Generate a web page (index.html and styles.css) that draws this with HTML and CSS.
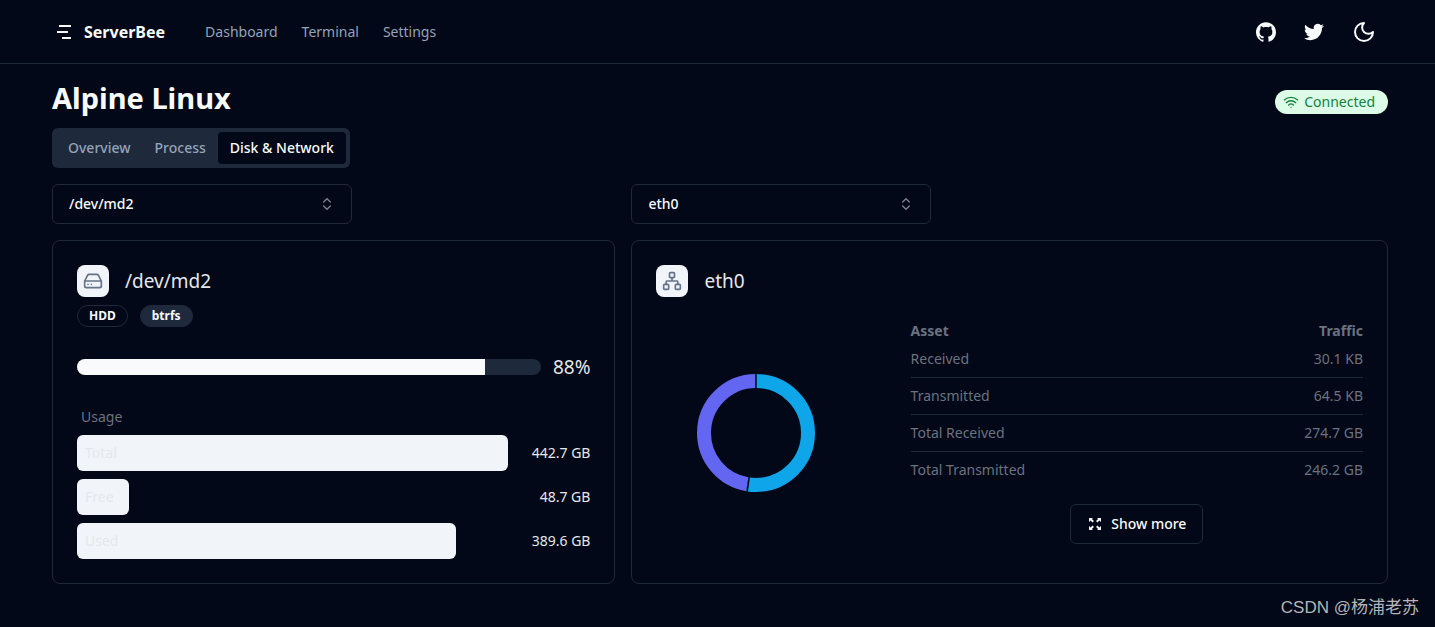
FILE: index.html
```html
<!DOCTYPE html>
<html lang="en">
<head>
<meta charset="utf-8">
<meta name="viewport" content="width=device-width, initial-scale=1">
<title>ServerBee</title>
<link rel="stylesheet" href="styles.css">
</head>
<body>
<header class="site-header">
  <a class="brand" href="#">
    <svg class="brand-mark" width="16" height="16" viewBox="0 0 16 16" fill="currentColor" aria-hidden="true"><path d="M3 1h12v2H3zM1 7h11v2H1zM6 13h9v2H6z"/></svg>
    <span>ServerBee</span>
  </a>
  <nav class="site-nav">
    <a href="#">Dashboard</a>
    <a href="#">Terminal</a>
    <a href="#">Settings</a>
  </nav>
  <div class="site-actions">
    <a class="icon-button" href="#" aria-label="GitHub">
      <svg width="20" height="20" viewBox="0 0 24 24" fill="currentColor"><path d="M12 .297c-6.63 0-12 5.373-12 12 0 5.303 3.438 9.8 8.205 11.385.6.113.82-.258.82-.577 0-.285-.01-1.04-.015-2.04-3.338.724-4.042-1.61-4.042-1.61C4.422 18.07 3.633 17.7 3.633 17.7c-1.087-.744.084-.729.084-.729 1.205.084 1.838 1.236 1.838 1.236 1.07 1.835 2.809 1.305 3.495.998.108-.776.417-1.305.76-1.605-2.665-.3-5.466-1.332-5.466-5.93 0-1.31.465-2.38 1.235-3.22-.135-.303-.54-1.523.105-3.176 0 0 1.005-.322 3.3 1.23.96-.267 1.98-.399 3-.405 1.02.006 2.04.138 3 .405 2.28-1.552 3.285-1.23 3.285-1.23.645 1.653.24 2.873.12 3.176.765.84 1.23 1.91 1.23 3.22 0 4.61-2.805 5.625-5.475 5.92.42.36.81 1.096.81 2.22 0 1.606-.015 2.896-.015 3.286 0 .315.21.69.825.57C20.565 22.092 24 17.592 24 12.297c0-6.627-5.373-12-12-12"/></svg>
    </a>
    <a class="icon-button" href="#" aria-label="Twitter">
      <svg width="20" height="20" viewBox="0 0 24 24" fill="currentColor"><path d="M23.953 4.57a10 10 0 01-2.825.775 4.958 4.958 0 002.163-2.723c-.951.555-2.005.959-3.127 1.184a4.92 4.92 0 00-8.384 4.482C7.69 8.095 4.067 6.13 1.64 3.162a4.822 4.822 0 00-.666 2.475c0 1.71.87 3.213 2.188 4.096a4.904 4.904 0 01-2.228-.616v.06a4.923 4.923 0 003.946 4.827 4.996 4.996 0 01-2.212.085 4.936 4.936 0 004.604 3.417 9.867 9.867 0 01-6.102 2.105c-.39 0-.779-.023-1.17-.067a13.995 13.995 0 007.557 2.209c9.053 0 13.998-7.496 13.998-13.985 0-.21 0-.42-.015-.63A9.935 9.935 0 0024 4.59z"/></svg>
    </a>
    <button class="icon-button icon-button-wide" type="button" aria-label="Toggle theme">
      <svg width="24" height="24" viewBox="0 0 24 24" fill="none" stroke="currentColor" stroke-width="2" stroke-linecap="round" stroke-linejoin="round"><path d="M12 3a6 6 0 0 0 9 9 9 9 0 1 1-9-9Z"/></svg>
    </button>
  </div>
</header>

<main class="page">
  <div class="page-heading">
    <h1>Alpine Linux</h1>
    <span class="status">
      <svg width="16" height="16" viewBox="0 0 24 24" fill="none" stroke="currentColor" stroke-width="2" stroke-linecap="round" stroke-linejoin="round" aria-hidden="true"><path d="M5 13a10 10 0 0 1 14 0M8.500 16.500a5 5 0 0 1 7 0M2 8.820a15 15 0 0 1 20 0M12 20h.01"/></svg>
      Connected
    </span>
  </div>

  <div class="tabs" role="tablist">
    <button class="tab" type="button" role="tab" aria-selected="false">Overview</button>
    <button class="tab" type="button" role="tab" aria-selected="false">Process</button>
    <button class="tab tab-active" type="button" role="tab" aria-selected="true">Disk &amp; Network</button>
  </div>

  <div class="panels">
    <div class="column column-disk">
      <div class="picker">
        <select class="picker-select" aria-label="Disk"><option>/dev/md2</option></select>
        <svg class="picker-icon" width="16" height="16" viewBox="0 0 24 24" fill="none" stroke="currentColor" stroke-width="2" stroke-linecap="round" stroke-linejoin="round" aria-hidden="true"><path d="m7 15 5 5 5-5M7 9l5-5 5 5"/></svg>
      </div>
      <section class="card">
        <div class="card-title">
          <span class="card-icon"><svg width="20" height="20" viewBox="0 0 24 24" fill="none" stroke="currentColor" stroke-width="2" stroke-linecap="round" stroke-linejoin="round" aria-hidden="true"><path d="M22 12H2M5.450 5.110 2 12v6a2 2 0 0 0 2 2h16a2 2 0 0 0 2-2v-6l-3.450-6.890A2 2 0 0 0 16.760 4H7.240a2 2 0 0 0-1.790 1.110zM6 16h.01M10 16h.01"/></svg></span>
          <h2>/dev/md2</h2>
        </div>
        <div class="badges">
          <span class="badge">HDD</span>
          <span class="badge badge-solid">btrfs</span>
        </div>
        <div class="meter">
          <div class="meter-track" role="progressbar" aria-label="Disk used" aria-valuenow="88" aria-valuemin="0" aria-valuemax="100"><div class="meter-fill" style="width:88%"></div></div>
          <span class="meter-value">88%</span>
        </div>
        <h3 class="usage-title">Usage</h3>
        <div class="usage">
          <div class="usage-track"><div class="usage-bar" style="width:100%">Total</div></div>
          <span class="usage-value">442.7 GB</span>
          <div class="usage-track"><div class="usage-bar" style="width:12%">Free</div></div>
          <span class="usage-value">48.7 GB</span>
          <div class="usage-track"><div class="usage-bar" style="width:88%">Used</div></div>
          <span class="usage-value">389.6 GB</span>
        </div>
      </section>
    </div>

    <div class="column column-network">
      <div class="picker">
        <select class="picker-select" aria-label="Network interface"><option>eth0</option></select>
        <svg class="picker-icon" width="16" height="16" viewBox="0 0 24 24" fill="none" stroke="currentColor" stroke-width="2" stroke-linecap="round" stroke-linejoin="round" aria-hidden="true"><path d="m7 15 5 5 5-5M7 9l5-5 5 5"/></svg>
      </div>
      <section class="card">
        <div class="card-title">
          <span class="card-icon"><svg width="20" height="20" viewBox="0 0 24 24" fill="none" stroke="currentColor" stroke-width="2" stroke-linecap="round" stroke-linejoin="round" aria-hidden="true"><rect x="16" y="16" width="6" height="6" rx="1"/><rect x="2" y="16" width="6" height="6" rx="1"/><rect x="9" y="2" width="6" height="6" rx="1"/><path d="M5 16v-3a1 1 0 0 1 1-1h12a1 1 0 0 1 1 1v3M12 12V8"/></svg></span>
          <h2>eth0</h2>
        </div>
        <div class="traffic">
          <svg class="donut" width="120" height="120" viewBox="0 0 120 120" role="img" aria-label="Total received and transmitted">
            <g fill="none" stroke-width="14" transform="rotate(-90 60 60)">
              <circle cx="60" cy="60" r="52" stroke="#0ea5e9" pathLength="1000" stroke-dasharray="527 473"/>
              <circle cx="60" cy="60" r="52" stroke="#6366f1" pathLength="1000" stroke-dasharray="473 527" stroke-dashoffset="-527"/>
            </g>
            <path class="donut-gap" d="M60 0v16M51 120l2.500-18"/>
          </svg>
          <div class="traffic-details">
            <table class="traffic-table">
              <thead><tr><th scope="col">Asset</th><th scope="col">Traffic</th></tr></thead>
              <tbody>
                <tr><td>Received</td><td>30.1 KB</td></tr>
                <tr><td>Transmitted</td><td>64.5 KB</td></tr>
                <tr><td>Total Received</td><td>274.7 GB</td></tr>
                <tr><td>Total Transmitted</td><td>246.2 GB</td></tr>
              </tbody>
            </table>
            <button class="more" type="button">
              <svg width="16" height="16" viewBox="0 0 16 16" aria-hidden="true"><path fill="currentColor" d="M2 2h4L4.900 3.100l2 2-1.300 1.300-2-2L2 6zM14 2h-4l1.100 1.100-2 2 1.300 1.300 2-2L14 6zM2 14h4l-1.100-1.100 2-2-1.300-1.300-2 2L2 10zM14 14h-4l1.100-1.100-2-2 1.300-1.300 2 2L14 10z"/></svg>
              Show more
            </button>
          </div>
        </div>
      </section>
    </div>
  </div>
  <p class="credit">CSDN @杨浦老苏</p>
</main>
</body>
</html>
```
FILE: styles.css
```css
:root {
  --background: #020817;
  --foreground: #f8fafc;
  --border: #1e293b;
  --muted: #94a3b8;
  --subtle: #6b7280;
  --tile: #f1f5f9;
}

* { box-sizing: border-box; }

body {
  margin: 0;
  background: var(--background);
  color: var(--foreground);
  font: 14px/20px "Noto Sans", "Noto Sans CJK SC", sans-serif;
}

h1, h2, h3, p { margin: 0; }
a { color: inherit; text-decoration: none; }
svg { display: block; flex: none; }
button, select { font: inherit; color: inherit; }

.site-header {
  display: flex;
  align-items: center;
  height: 64px;
  padding: 0 47px 0 56px;
  border-bottom: 1px solid var(--border);
}
.brand {
  display: flex;
  align-items: center;
  gap: 12px;
  font-size: 16px;
  font-weight: 700;
  line-height: 24px;
}
.site-nav {
  display: flex;
  gap: 24px;
  margin-left: 40px;
  color: var(--muted);
}
.site-actions {
  display: flex;
  align-items: center;
  gap: 8px;
  margin-left: auto;
}
.icon-button {
  display: grid;
  place-items: center;
  width: 40px;
  height: 40px;
  padding: 0;
  border: 0;
  background: none;
}
.icon-button-wide {
  width: 46px;
  padding-right: 2px;
}

.page { padding: 16px 47px 0 52px; }
.page-heading {
  display: flex;
  align-items: center;
  justify-content: space-between;
}
.page-heading h1 {
  font-size: 29px;
  line-height: 36px;
  font-weight: 700;
}
.status {
  display: flex;
  align-items: center;
  gap: 5px;
  height: 24px;
  margin-top: 8px;
  padding: 0 13px 0 8px;
  border-radius: 12px;
  background: #dcfce7;
  color: #15803d;
}

.tabs {
  display: flex;
  width: max-content;
  margin: 12px 0 16px;
  padding: 4px;
  border-radius: 6px;
  background: var(--border);
}
.tab {
  padding: 6px 12px;
  border: 0;
  border-radius: 4px;
  background: none;
  color: var(--muted);
  font-weight: 500;
}
.tab-active {
  background: var(--background);
  color: var(--foreground);
}

.panels {
  display: grid;
  grid-template-columns: repeat(7, 1fr);
  gap: 16px;
}
.column {
  display: flex;
  flex-direction: column;
  gap: 16px;
}
.column-disk { grid-column: span 3; }
.column-network { grid-column: span 4; }

.picker {
  display: grid;
  align-items: center;
  width: 300px;
  max-width: 100%;
}
.picker > * { grid-area: 1 / 1; }
.picker-select {
  appearance: none;
  height: 40px;
  padding: 0 16px;
  border: 1px solid var(--border);
  border-radius: 6px;
  background: var(--background);
  font-weight: 500;
}
.picker-icon {
  justify-self: end;
  margin-right: 17px;
  opacity: 0.5;
  pointer-events: none;
}

.card {
  flex: 1;
  padding: 24px;
  border: 1px solid var(--border);
  border-radius: 8px;
}
.card-title {
  display: flex;
  align-items: center;
  gap: 16px;
}
.card-title h2 {
  color: #e5e7eb;
  font-size: 19px;
  line-height: 28px;
  font-weight: 400;
}
.card-icon {
  display: grid;
  place-items: center;
  width: 32px;
  height: 32px;
  border-radius: 8px;
  background: var(--tile);
  color: #64748b;
}

.badges {
  display: flex;
  gap: 12px;
  margin-top: 8px;
}
.badge {
  padding: 2px 11px;
  border: 1px solid var(--border);
  border-radius: 11px;
  font-size: 12px;
  line-height: 16px;
  font-weight: 700;
}
.badge-solid { background: var(--border); }

.meter {
  display: flex;
  align-items: center;
  gap: 12px;
  margin: 24px 0;
}
.meter-track {
  flex: 1;
  height: 16px;
  overflow: hidden;
  border-radius: 8px;
  background: var(--border);
}
.meter-fill {
  height: 100%;
  background: var(--foreground);
}
.meter-value {
  color: #e5e7eb;
  font-size: 19px;
  line-height: 32px;
}

.usage-title {
  padding-left: 4px;
  color: var(--subtle);
  font-size: 14px;
  font-weight: 400;
}
.usage {
  display: grid;
  grid-template-columns: 1fr auto;
  align-items: center;
  gap: 8px 24px;
  margin-top: 8px;
  color: #e5e7eb;
}
.usage-bar {
  padding: 8px;
  border-radius: 6px;
  background: var(--tile);
}
.usage-value { text-align: right; }

.traffic {
  display: grid;
  grid-template-columns: 1fr 1fr 1fr;
  align-items: center;
  gap: 56px;
  margin-top: 24px;
}
.donut { justify-self: center; }
.donut-gap {
  stroke: var(--background);
  stroke-width: 1.5;
}
.traffic-details {
  grid-column: span 2;
  display: flex;
  flex-direction: column;
  align-items: center;
  gap: 16px;
}
.traffic-table {
  width: 100%;
  border-collapse: collapse;
  color: var(--subtle);
}
.traffic-table th {
  padding: 0;
  text-align: left;
  font-weight: 700;
}
.traffic-table td { padding: 8px 0; }
.traffic-table tr > :last-child { text-align: right; }
.traffic-table tbody tr + tr { border-top: 1px solid var(--border); }

.more {
  display: flex;
  align-items: center;
  gap: 8px;
  height: 40px;
  padding: 0 16px;
  border: 1px solid var(--border);
  border-radius: 6px;
  background: none;
  font-weight: 500;
}

.credit {
  margin: 12px -31px 0 0;
  color: #b4b5b9;
  font: 17px/24px "Liberation Sans", "Noto Sans CJK SC", sans-serif;
  text-align: right;
}
```
